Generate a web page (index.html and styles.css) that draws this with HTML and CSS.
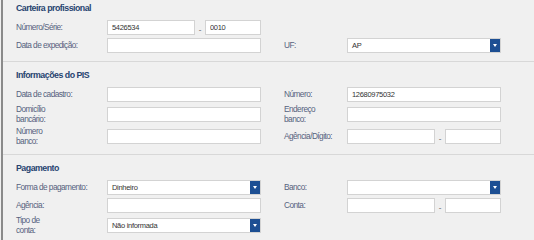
FILE: index.html
```html
<!DOCTYPE html>
<html lang="pt-BR">
<head>
  <meta charset="UTF-8">
  <title>Cadastro</title>
  <link rel="stylesheet" href="styles.css">
</head>
<body>
  <div class="page">
    <!-- Carteira profissional -->
    <section class="block">
      <h2>Carteira profissional</h2>
      <div class="fields">
        <label>Número/Série:</label>
        <div class="split">
          <input class="field first" type="text" value="5426534">
          <span class="dash">-</span>
          <input class="field second" type="text" value="0010">
        </div>
        <span></span><span></span>

        <label>Data de expedição:</label>
        <input class="field" type="text">
        <label class="right">UF:</label>
        <div class="select"><span>AP</span><span class="arrow"></span></div>
      </div>
    </section>

    <!-- Informações do PIS -->
    <section class="block">
      <h2>Informações do PIS</h2>
      <div class="fields">
        <label>Data de cadastro:</label>
        <input class="field" type="text">
        <label class="right">Número:</label>
        <input class="field" type="text" value="12680975032">

        <label>Domicílio<br>bancário:</label>
        <input class="field" type="text">
        <label class="right">Endereço<br>banco:</label>
        <input class="field" type="text">

        <label>Número<br>banco:</label>
        <input class="field" type="text">
        <label class="right">Agência/Dígito:</label>
        <div class="split">
          <input class="field first" type="text">
          <span class="dash">-</span>
          <input class="field second" type="text">
        </div>
      </div>
    </section>

    <!-- Pagamento -->
    <section class="block">
      <h2>Pagamento</h2>
      <div class="fields">
        <label>Forma de pagamento:</label>
        <div class="select"><span>Dinheiro</span><span class="arrow"></span></div>
        <label class="right">Banco:</label>
        <div class="select"><span></span><span class="arrow"></span></div>

        <label>Agência:</label>
        <input class="field" type="text">
        <label class="right">Conta:</label>
        <div class="split">
          <input class="field first" type="text">
          <span class="dash">-</span>
          <input class="field second" type="text">
        </div>

        <label>Tipo de<br>conta:</label>
        <div class="select"><span>Não informada</span><span class="arrow"></span></div>
        <span></span><span></span>
      </div>
    </section>
  </div>
</body>
</html>
```

FILE: styles.css
```css
body {
  margin: 0;
  background: #f0f0f0;
  font-family: "Liberation Sans", Arial, sans-serif;
}

.page {
  margin-left: 1px;
  border-left: 2px solid #8a8a8a;
  height: 240px;
  overflow: hidden;
}

.block {
  padding: 7px 0 8px 13px;
  border-top: 1px solid #d8d8d8;
}

.block:first-child {
  padding-top: 2px;
  border-top: none;
}

.block h2 {
  margin: 0 0 5px;
  font-size: 8.8px;
  line-height: 12px;
  letter-spacing: -0.5px;
  font-weight: bold;
  color: #274470;
}

.fields {
  display: grid;
  grid-template-columns: 91px 154px 86px 154px;
  grid-auto-rows: minmax(16px, auto);
  row-gap: 2px;
  align-items: center;
}

.fields label {
  font-size: 8.3px;
  line-height: 10px;
  letter-spacing: -0.55px;
  color: #56627e;
}

.fields label.right {
  padding-left: 23px;
}

.field {
  box-sizing: border-box;
  width: 100%;
  height: 15px;
  margin: 0;
  padding: 0 4px;
  border: 1px solid #d3d3d3;
  background: #fff;
  font-family: inherit;
  font-size: 7.5px;
  letter-spacing: -0.3px;
  color: #333;
  outline: none;
}

.split {
  display: flex;
  align-items: center;
}

.split .first {
  flex: 1;
  width: auto;
  min-width: 0;
}

.split .dash {
  width: 10px;
  padding-top: 5px;
  text-align: center;
  font-size: 8px;
  color: #555;
}

.split .second {
  width: 56px;
}

.select {
  box-sizing: border-box;
  height: 15px;
  display: flex;
  align-items: center;
  justify-content: space-between;
  border: 1px solid #d3d3d3;
  background: #fff;
  font-size: 7.5px;
  letter-spacing: -0.3px;
  color: #333;
  padding-left: 4px;
}

.select .arrow {
  width: 10px;
  align-self: stretch;
  background: #1d4f93;
  position: relative;
}

.select .arrow::after {
  content: '';
  position: absolute;
  left: 3px;
  top: 5px;
  border-left: 2px solid transparent;
  border-right: 2px solid transparent;
  border-top: 3px solid #fff;
}
```
